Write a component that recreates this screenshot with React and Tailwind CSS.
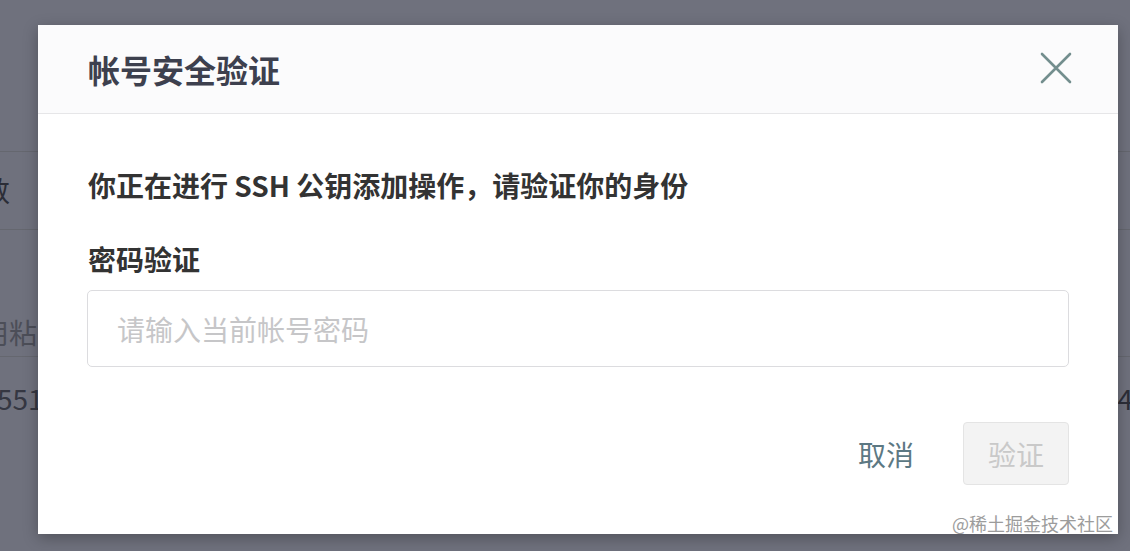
import React from "react";

const FONT = { fontFamily: '"Noto Sans CJK SC", "Noto Sans", sans-serif' };

export default function App() {
  return (
    <div className="relative h-[551px] w-full overflow-hidden bg-[#6f717d]" style={FONT}>
      {/* masked page underneath */}
      <div className="flex flex-col text-[28px] leading-none">
        <div className="h-[152px] border-b border-[#65676f]" />
        <div className="flex h-[78px] items-center border-b border-[#65676f] pb-[2px]">
          <span className="ml-[-18px] text-[#2b2d37]">数</span>
        </div>
        <div className="flex h-[127px] items-end border-b border-[#65676f] pb-[10px]">
          <span className="ml-[-19px] text-[#4c4e58]">用粘</span>
        </div>
        <div className="flex h-[84px] items-center justify-between pb-[2px]">
          <span className="ml-[-3px] text-[#353742]">551</span>
          <span className="mr-[-3px] text-[#2c2e38]">4</span>
        </div>
      </div>

      {/* dialog */}
      <div className="absolute left-[38px] top-[25px] flex h-[509px] w-[1080px] flex-col bg-white shadow-[0_4px_14px_rgba(0,0,0,0.28)]">
        <div className="flex h-[89px] shrink-0 items-center justify-between border-b border-[#e6e6e8] bg-[#fbfbfc] pl-[50px] pr-[45px]">
          <h1 className="text-[32px] font-bold leading-none text-[#3d404e]">帐号安全验证</h1>
          <svg width="34" height="34" viewBox="0 0 34 34" className="mb-[2px]">
            <path d="M3 3 L31 31 M31 3 L3 31" stroke="#738e8e" strokeWidth="2.6" strokeLinecap="round" />
          </svg>
        </div>
        <div className="flex flex-1 flex-col pl-[49px] pr-[49px]">
          <p className="mt-[51px] pl-[1px] text-[28px] font-bold leading-[40px] text-[#333333]">
            你正在进行 SSH 公钥添加操作，请验证你的身份
          </p>
          <p className="mt-[34px] pl-[1px] text-[28px] font-bold leading-[40px] text-[#333333]">密码验证</p>
          <div className="mt-[11px] flex h-[77px] items-center rounded-[5px] border border-[#dcdcdf] pl-[29px]">
            <span className="text-[28px] leading-none text-[#c6c6c8]">请输入当前帐号密码</span>
          </div>
          <div className="mt-[55px] flex items-center justify-end gap-[49px]">
            <span className="text-[28px] leading-none text-[#5c7883]">取消</span>
            <div className="flex h-[63px] w-[106px] items-center justify-center rounded-[4px] border border-[#e4e4e4] bg-[#f3f3f3]">
              <span className="text-[28px] leading-none text-[#c9c9c9]">验证</span>
            </div>
          </div>
        </div>
      </div>

      {/* watermark */}
      <div className="absolute right-[17px] top-[512px] text-[18px] leading-[22px] text-[#9c9c9c]">
        @稀土掘金技术社区
      </div>
    </div>
  );
}
